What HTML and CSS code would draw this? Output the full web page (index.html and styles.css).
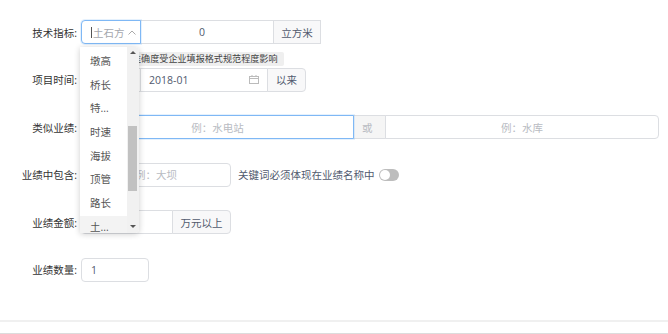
FILE: index.html
```html
<!DOCTYPE html>
<html lang="zh-CN">

<head>
    <meta charset="UTF-8">
    <meta name="viewport" content="width=device-width, initial-scale=1.0">
    <title>业绩筛选</title>
    <link rel="stylesheet" href="styles.css">
</head>

<body>
    <div class="form">
        <div class="row">
            <label class="label">技术指标:</label>
            <div class="group">
                <div class="select focus">
                    <span class="cursor"></span>
                    <span class="select-text">土石方</span>
                    <svg class="arrow" width="8" height="5" viewBox="0 0 8 5">
                        <path d="M0.5 4.5 L4 1 L7.5 4.5" fill="none" stroke="#aaa" stroke-width="1"/>
                    </svg>
                </div>
                <div class="input w-134 center pad-right">0</div>
                <div class="addon w-48">立方米</div>

                <div class="hint">准确度受企业填报格式规范程度影响</div>

                <div class="dropdown">
                    <ul class="options">
                        <li>墩高</li>
                        <li>桥长</li>
                        <li>特...</li>
                        <li>时速</li>
                        <li>海拔</li>
                        <li>顶管</li>
                        <li>路长</li>
                        <li class="hover">土...</li>
                    </ul>
                    <div class="scrollbar">
                        <span class="tri up"></span>
                        <span class="thumb"></span>
                        <span class="tri down"></span>
                    </div>
                </div>
            </div>
        </div>

        <div class="row">
            <label class="label">项目时间:</label>
            <div class="group">
                <div class="select"></div>
                <div class="input w-128 date">
                    <span>2018-01</span>
                    <svg class="cal" width="10" height="9" viewBox="0 0 10 9">
                        <rect x="0.5" y="1.5" width="9" height="7" fill="none" stroke="#bbb"/>
                        <line x1="0.5" y1="3.5" x2="9.5" y2="3.5" stroke="#bbb"/>
                        <line x1="3" y1="0" x2="3" y2="2" stroke="#bbb"/>
                        <line x1="7" y1="0" x2="7" y2="2" stroke="#bbb"/>
                    </svg>
                </div>
                <div class="addon w-39">以来</div>
            </div>
        </div>

        <div class="row">
            <label class="label">类似业绩:</label>
            <div class="group">
                <div class="input w-273 center placeholder focus">例：水电站</div>
                <div class="addon w-33 left muted">或</div>
                <div class="input w-274 center placeholder">例：水库</div>
            </div>
        </div>

        <div class="row">
            <label class="label">业绩中包含:</label>
            <div class="group">
                <div class="input w-150 center placeholder">例：大坝</div>
            </div>
            <span class="note">关键词必须体现在业绩名称中</span>
            <span class="switch"><span class="knob"></span></span>
        </div>

        <div class="row">
            <label class="label">业绩金额:</label>
            <div class="group">
                <div class="input w-92"></div>
                <div class="addon w-59">万元以上</div>
            </div>
        </div>

        <div class="row">
            <label class="label">业绩数量:</label>
            <div class="group">
                <div class="input w-68">1</div>
            </div>
        </div>
    </div>

    <div class="footer"></div>
</body>

</html>
```

FILE: styles.css
```css
* {
    box-sizing: border-box;
}

body {
    margin: 0;
    height: 334px;
    overflow: hidden;
    background: #fff;
    font-family: "Open Sans", "Noto Sans CJK SC", sans-serif;
    font-size: 10.5px;
    color: #515a6e;
}

.form {
    display: flex;
    flex-direction: column;
    gap: 23.6px;
    padding-top: 20px;
}

.row {
    display: flex;
    align-items: center;
    height: 24px;
    white-space: nowrap;
}

.label {
    width: 81px;
    padding-right: 4px;
    text-align: right;
    color: #333;
}

.group {
    position: relative;
    display: flex;
    height: 100%;
}

.group > div + div {
    margin-left: -1px;
}

.input,
.select,
.addon {
    display: flex;
    align-items: center;
    flex-shrink: 0;
    height: 100%;
    border: 1px solid #dcdee2;
    background: #fff;
    padding: 0 9px;
}

.group > :first-child {
    border-radius: 4px 0 0 4px;
}

.group > :last-of-type {
    border-radius: 0 4px 4px 0;
}

.group > :only-of-type {
    border-radius: 4px;
}

.focus {
    position: relative;
    z-index: 1;
    border-color: #7fb8f5;
    box-shadow: 0 0 0 1px rgba(45, 140, 240, 0.12);
}

.center {
    justify-content: center;
}

.pad-right {
    padding-right: 19px;
}

.addon {
    justify-content: center;
    padding: 0;
    background: #f8f8f9;
    color: #515a6e;
}

.addon.left {
    justify-content: flex-start;
    background: #f5f5f5;
    padding-left: 8px;
}

.placeholder,
.addon.muted {
    color: #b8bbc2;
}

.select {
    width: 60px;
    padding: 0 0 0 9px;
}

.select-text {
    color: #a5a8ae;
    margin-left: 1px;
}

.cursor {
    width: 1px;
    height: 11px;
    background: #555;
}

.arrow {
    margin-left: 3px;
}

.w-33 { width: 33px; }
.w-39 { width: 39px; }
.w-48 { width: 48px; }
.w-59 { width: 59px; }
.w-68 { width: 68px; }
.w-92 { width: 92px; }
.w-128 { width: 128px; }
.w-134 { width: 134px; }
.w-150 { width: 150px; }
.w-273 { width: 273px; }
.w-274 { width: 274px; }

.date {
    justify-content: space-between;
    padding-left: 8px;
    padding-right: 8px;
}

.hint {
    position: absolute;
    left: 46px;
    top: 32px;
    height: 14px;
    padding: 0 6px;
    background: #efefef;
    border-radius: 2px;
    font-size: 9.1px;
    line-height: 14px;
    color: #444;
}

.dropdown {
    position: absolute;
    left: 0;
    top: 27px;
    z-index: 10;
    display: flex;
    width: 59px;
    height: 186px;
    overflow: hidden;
    background: #fff;
    box-shadow: 0 1px 6px rgba(0, 0, 0, 0.2);
}

.options {
    flex: 1;
    margin: 0;
    padding: 3px 0 0;
    list-style: none;
}

.options li {
    height: 23.7px;
    line-height: 23.7px;
    padding-left: 10px;
    color: #555;
}

.options li.hover {
    background: #f3f3f3;
}

.scrollbar {
    position: relative;
    display: flex;
    flex-direction: column;
    align-items: center;
    width: 12px;
    background: #f1f1f1;
}

.tri {
    width: 0;
    height: 0;
    border-left: 3px solid transparent;
    border-right: 3px solid transparent;
}

.tri.up {
    margin-top: 4px;
    border-bottom: 3px solid #555;
}

.tri.down {
    margin-top: auto;
    margin-bottom: 5px;
    border-top: 3px solid #555;
}

.thumb {
    position: absolute;
    top: 79px;
    left: 1px;
    width: 9px;
    height: 65px;
    background: #c1c1c1;
}

.note {
    margin-left: 7px;
    color: #515a6e;
}

.switch {
    position: relative;
    width: 20px;
    height: 12px;
    margin-left: 4px;
    border-radius: 6px;
    background: #bdbdbd;
}

.knob {
    position: absolute;
    left: 1px;
    top: 1px;
    width: 10px;
    height: 10px;
    border-radius: 50%;
    background: #fff;
}

.footer {
    margin-top: 38px;
    height: 14px;
    border-top: 2px solid #f0f0f0;
    border-bottom: 1px solid #dcdcdc;
}
```
